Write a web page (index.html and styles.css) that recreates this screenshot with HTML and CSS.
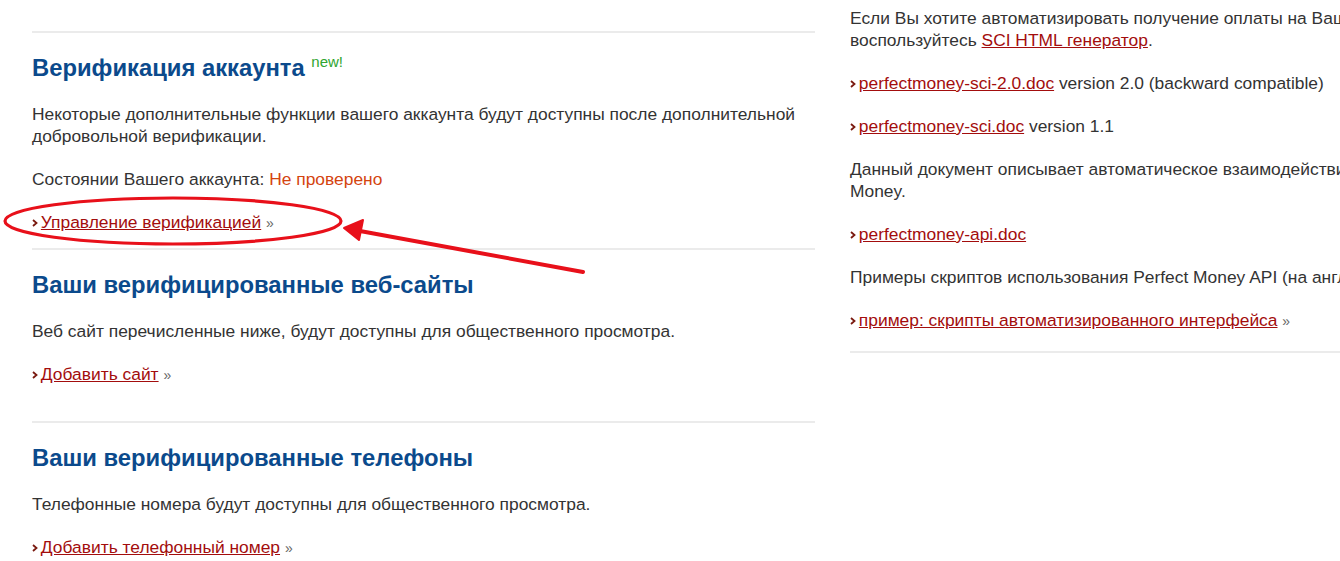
FILE: index.html
```html
<!DOCTYPE html>
<html lang="ru">
<head>
<meta charset="utf-8">
<title>Верификация</title>
<link rel="stylesheet" href="styles.css">
</head>
<body>
<div class="page">
  <div class="main">
    <section class="block first">
      <h2 class="title">Верификация аккаунта <sup class="new">new!</sup></h2>
      <p>Некоторые дополнительные функции вашего аккаунта будут доступны после дополнительной добровольной верификации.</p>
      <p>Состоянии Вашего аккаунта: <span class="status">Не проверено</span></p>
      <p class="link-row"><svg class="bul" width="6" height="8" viewBox="0 0 6 8"><path d="M1 1 L4.5 4 L1 7" fill="none" stroke="#7a1a10" stroke-width="1.8"/></svg> <a href="#">Управление верификацией</a> <span class="raquo">»</span></p>
    </section>
    <section class="block second">
      <h2 class="title">Ваши верифицированные веб-сайты</h2>
      <p>Веб сайт перечисленные ниже, будут доступны для общественного просмотра.</p>
      <p class="link-row"><svg class="bul" width="6" height="8" viewBox="0 0 6 8"><path d="M1 1 L4.5 4 L1 7" fill="none" stroke="#7a1a10" stroke-width="1.8"/></svg> <a href="#">Добавить сайт</a> <span class="raquo">»</span></p>
    </section>
    <section class="block third">
      <h2 class="title">Ваши верифицированные телефоны</h2>
      <p>Телефонные номера будут доступны для общественного просмотра.</p>
      <p class="link-row"><svg class="bul" width="6" height="8" viewBox="0 0 6 8"><path d="M1 1 L4.5 4 L1 7" fill="none" stroke="#7a1a10" stroke-width="1.8"/></svg> <a href="#">Добавить телефонный номер</a> <span class="raquo">»</span></p>
    </section>
  </div>
  <aside class="side">
    <p>Если Вы хотите автоматизировать получение оплаты на Вашем веб-сайте,<br>воспользуйтесь <a href="#">SCI HTML генератор</a>.</p>
    <p class="link-row"><svg class="bul" width="6" height="8" viewBox="0 0 6 8"><path d="M1 1 L4.5 4 L1 7" fill="none" stroke="#7a1a10" stroke-width="1.8"/></svg> <a href="#">perfectmoney-sci-2.0.doc</a> version 2.0 (backward compatible)</p>
    <p class="link-row"><svg class="bul" width="6" height="8" viewBox="0 0 6 8"><path d="M1 1 L4.5 4 L1 7" fill="none" stroke="#7a1a10" stroke-width="1.8"/></svg> <a href="#">perfectmoney-sci.doc</a> version 1.1</p>
    <p>Данный документ описывает автоматическое взаимодействие с платежной системой Perfect<br>Money.</p>
    <p class="link-row"><svg class="bul" width="6" height="8" viewBox="0 0 6 8"><path d="M1 1 L4.5 4 L1 7" fill="none" stroke="#7a1a10" stroke-width="1.8"/></svg> <a href="#">perfectmoney-api.doc</a></p>
    <p>Примеры скриптов использования Perfect Money API (на английском языке):</p>
    <p class="link-row"><svg class="bul" width="6" height="8" viewBox="0 0 6 8"><path d="M1 1 L4.5 4 L1 7" fill="none" stroke="#7a1a10" stroke-width="1.8"/></svg> <a href="#">пример: скрипты автоматизированного интерфейса</a> <span class="raquo">»</span></p>
    <div class="side-rule"></div>
  </aside>
</div>
<svg class="annot" width="600" height="290" viewBox="0 0 600 290">
  <ellipse cx="173" cy="221" rx="168" ry="23" fill="none" stroke="#e8101a" stroke-width="3.2"/>
  <line x1="583" y1="272" x2="360" y2="231" stroke="#e8101a" stroke-width="4" stroke-linecap="round"/>
  <path d="M344 228 L363 220 L359 240 Z" fill="#e8101a" stroke="#e8101a" stroke-width="2" stroke-linejoin="round"/>
</svg>
</body>
</html>
```

FILE: styles.css
```css
html, body {
  margin: 0;
  padding: 0;
  background: #ffffff;
  overflow: hidden;
}
body {
  width: 1340px;
  height: 561px;
  position: relative;
  font-family: "Liberation Sans", Arial, sans-serif;
  font-size: 17.4px;
  color: #333333;
}
.page {
  display: flex;
  gap: 35px;
  padding-left: 32px;
  padding-top: 7px;
}
.main {
  width: 783px;
  flex: none;
  padding-top: 24px;
}
.block {
  border-top: 2px solid #ebebeb;
}
.first { padding-bottom: 14px; }
.second { padding-bottom: 35px; }
.title {
  margin: 21px 0 0;
  font-size: 23.8px;
  line-height: 28px;
  font-weight: bold;
  color: #0b4a8c;
}
.new {
  font-size: 15px;
  font-weight: normal;
  color: #2fa52f;
  vertical-align: 9px;
  line-height: 0;
}
p {
  margin: 21px 0 0;
  line-height: 22px;
}
a {
  color: #a30d0d;
  text-decoration: underline;
}
.status { color: #d4440f; }
.bul {
  vertical-align: 1px;
  margin-right: -2px;
}
.raquo {
  color: #666;
  font-size: 14px;
}
.side {
  width: 760px;
  flex: none;
  white-space: nowrap;
}
.side > p:first-child { margin-top: 0; }
.side-rule {
  margin-top: 19px;
  border-top: 2px solid #ebebeb;
}
.annot {
  position: absolute;
  left: 0;
  top: 0;
  pointer-events: none;
}
```
